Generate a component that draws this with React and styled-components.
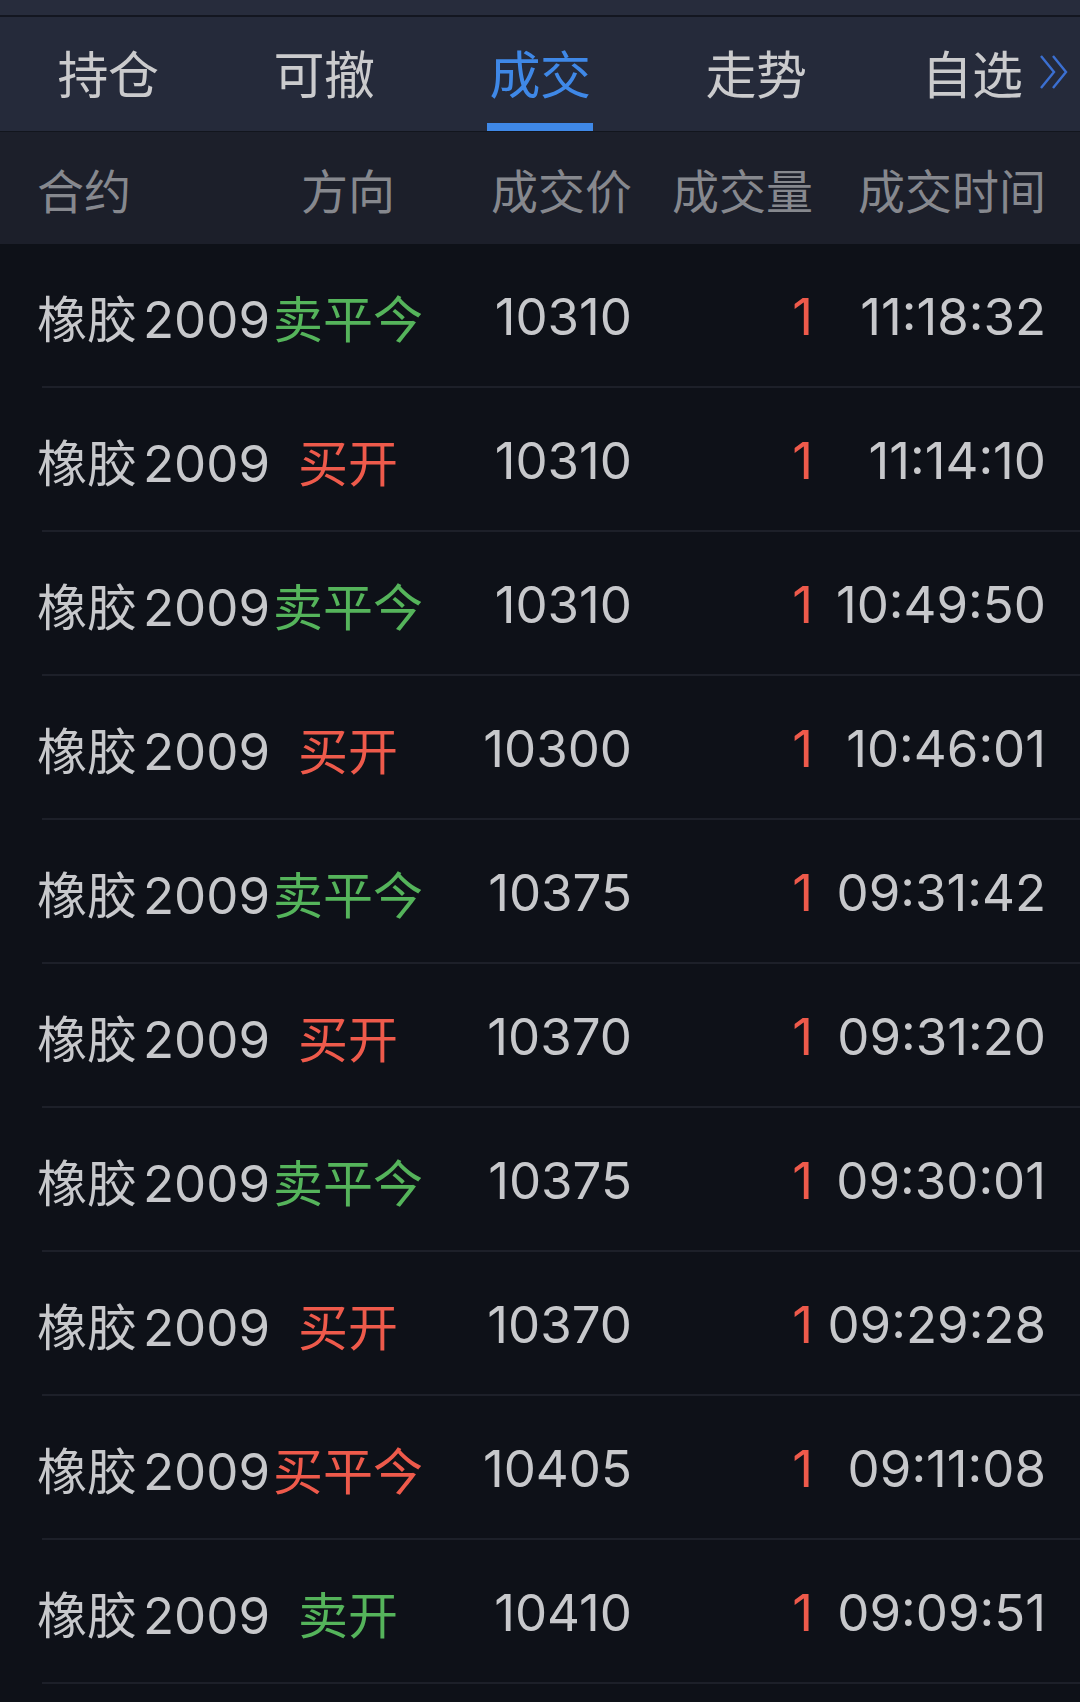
import styled, { createGlobalStyle } from 'styled-components';

const GlobalStyle = createGlobalStyle`
  html, body {
    margin: 0;
    padding: 0;
    background: #0e1118;
  }
  body {
    font-family: "Inter", "Noto Sans CJK SC", sans-serif;
    -webkit-font-smoothing: antialiased;
  }
`;

const tabs = ['持仓', '可撤', '成交', '走势', '自选'];

const trades = [
  { dir: '卖平今', side: 'sell', price: '10310', qty: 1, time: '11:18:32' },
  { dir: '买开', side: 'buy', price: '10310', qty: 1, time: '11:14:10' },
  { dir: '卖平今', side: 'sell', price: '10310', qty: 1, time: '10:49:50' },
  { dir: '买开', side: 'buy', price: '10300', qty: 1, time: '10:46:01' },
  { dir: '卖平今', side: 'sell', price: '10375', qty: 1, time: '09:31:42' },
  { dir: '买开', side: 'buy', price: '10370', qty: 1, time: '09:31:20' },
  { dir: '卖平今', side: 'sell', price: '10375', qty: 1, time: '09:30:01' },
  { dir: '买开', side: 'buy', price: '10370', qty: 1, time: '09:29:28' },
  { dir: '买平今', side: 'buy', price: '10405', qty: 1, time: '09:11:08' },
  { dir: '卖开', side: 'sell', price: '10410', qty: 1, time: '09:09:51' },
];

const sideColor = { buy: '#ee5a4b', sell: '#55b45b' };

const MoreIcon = () => (
  <svg width="34" height="36" viewBox="0 0 34 36" fill="none">
    <path d="M4 2 L17 18 L4 34" stroke="#3b6fd1" strokeWidth="2.4" />
    <path d="M16 2 L29 18 L16 34" stroke="#3b6fd1" strokeWidth="2.4" />
  </svg>
);

const App = () => {
  return (
    <Page>
      <GlobalStyle />
      <TopStrip />
      <TabBar>
        {tabs.map((t, i) => (
          <Tab key={t} active={t === '成交'}>
            <TabLabel>
              {t}
              {i === tabs.length - 1 && (
                <More>
                  <MoreIcon />
                </More>
              )}
            </TabLabel>
          </Tab>
        ))}
      </TabBar>
      <HeaderRow>
        <NameCell>合约</NameCell>
        <DirCell>方向</DirCell>
        <PriceCell>成交价</PriceCell>
        <QtyCell>成交量</QtyCell>
        <TimeCell>成交时间</TimeCell>
      </HeaderRow>
      <List>
        {trades.map((r, i) => (
          <Row key={i}>
            <NameCell>
              <Cjk>橡胶</Cjk>2009
            </NameCell>
            <DirCell color={sideColor[r.side]} big>
              {r.dir}
            </DirCell>
            <PriceCell>{r.price}</PriceCell>
            <QtyCell color={sideColor.buy}>{r.qty}</QtyCell>
            <TimeCell>{r.time}</TimeCell>
          </Row>
        ))}
      </List>
    </Page>
  );
};

const Page = styled.div`
  width: 1080px;
  min-height: 1702px;
  background: #0e1118;
  overflow: hidden;
`;

const TopStrip = styled.div`
  height: 15px;
  background: #272c3c;
  border-bottom: 2px solid #131620;
`;

const TabBar = styled.div`
  display: grid;
  grid-template-columns: repeat(5, 1fr);
  height: 114px;
  background: #252a3a;
  border-bottom: 1px solid #12151d;
`;

const Tab = styled.div`
  position: relative;
  display: flex;
  align-items: center;
  justify-content: center;
  padding-bottom: 4px;
  color: ${({ active }) => (active ? '#3f88e7' : '#cbcbcd')};
  font-family: "Noto Sans CJK SC", sans-serif;
  font-size: 51px;
  letter-spacing: -0.5px;

  &::after {
    content: '';
    display: ${({ active }) => (active ? 'block' : 'none')};
    position: absolute;
    bottom: 0;
    left: 50%;
    width: 106px;
    height: 8px;
    margin-left: -53px;
    background: #3f88e7;
  }
`;

const TabLabel = styled.span`
  position: relative;
  line-height: 1;
`;

const More = styled.span`
  position: absolute;
  left: 100%;
  top: 50%;
  margin-left: 14px;
  margin-top: -18px;
  display: flex;
`;

const HeaderRow = styled.div`
  display: flex;
  align-items: center;
  height: 112px;
  padding-left: 37px;
  background: #1c1f2a;
  color: #86888e;
  font-family: "Noto Sans CJK SC", sans-serif;
  font-size: 47px;
`;

const List = styled.div`
  display: flex;
  flex-direction: column;
`;

const Row = styled.div`
  position: relative;
  display: flex;
  align-items: center;
  height: 144px;
  box-sizing: border-box;
  padding-left: 37px;
  color: #c7c8cb;
  font-size: 51px;

  &::after {
    content: '';
    position: absolute;
    left: 42px;
    right: 0;
    bottom: 0;
    height: 2px;
    background: #1d2029;
  }
`;

const Cjk = styled.span`
  font-family: "Noto Sans CJK SC", sans-serif;
  font-size: 50px;
  margin-right: 6px;
`;

const NameCell = styled.div`
  width: 225px;
  white-space: nowrap;
`;

const DirCell = styled.div`
  width: 172px;
  display: flex;
  justify-content: center;
  white-space: nowrap;
  color: ${({ color }) => color || 'inherit'};
  font-family: "Noto Sans CJK SC", sans-serif;
  font-size: ${({ big }) => (big ? '50px' : 'inherit')};
`;

const PriceCell = styled.div`
  width: 198px;
  text-align: right;
`;

const QtyCell = styled.div`
  width: 181px;
  text-align: right;
  color: ${({ color }) => color || 'inherit'};
`;

const TimeCell = styled.div`
  width: 233px;
  text-align: right;
  white-space: nowrap;
`;

export default App;
